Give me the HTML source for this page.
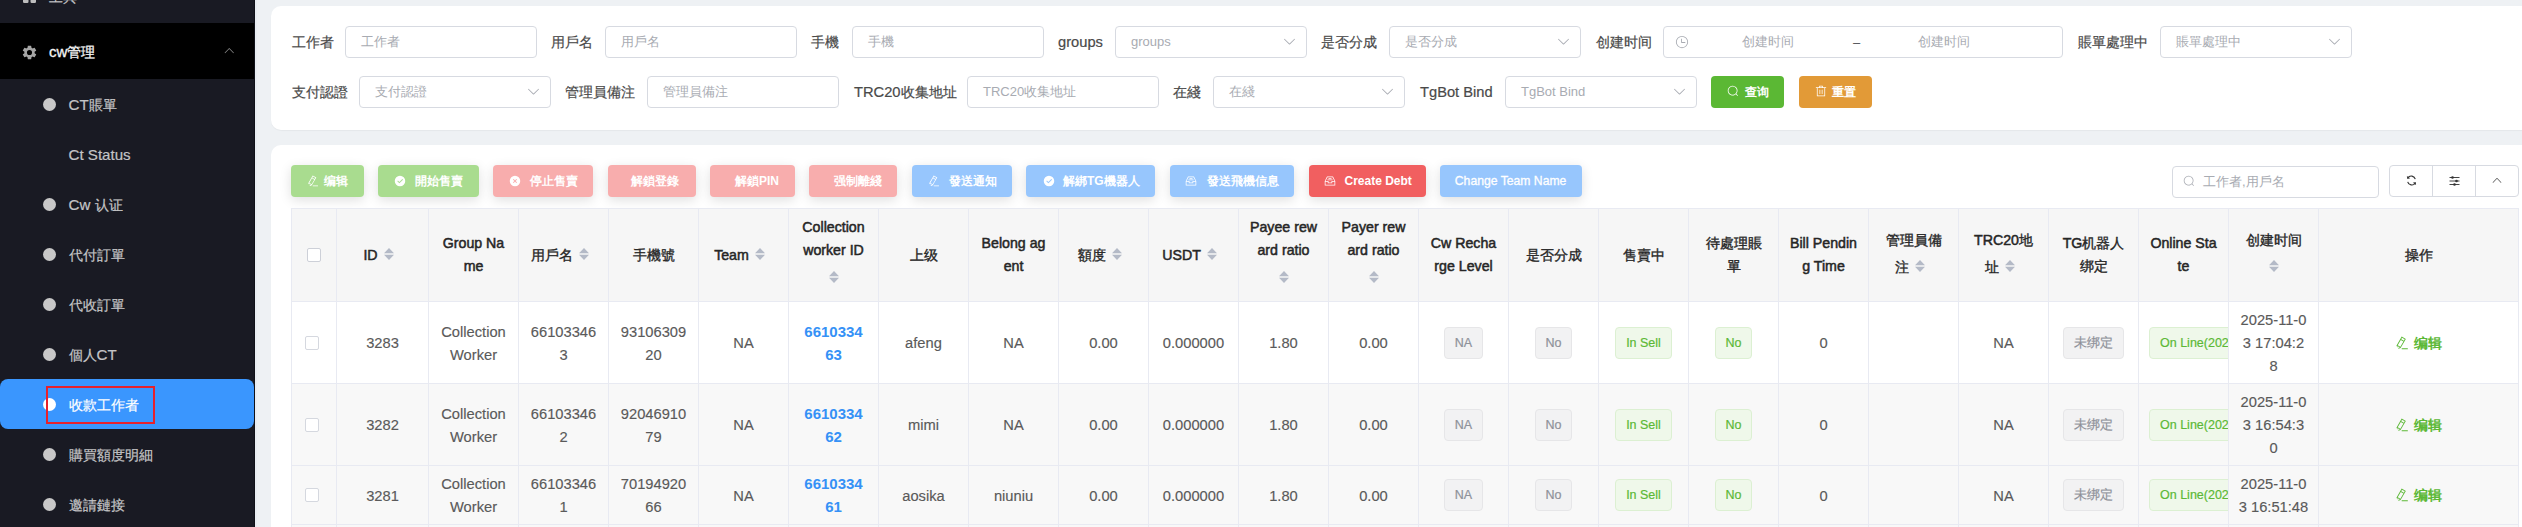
<!DOCTYPE html><html><head><meta charset="utf-8"><style>
*{box-sizing:border-box;margin:0;padding:0}
html,body{width:2522px;height:527px;overflow:hidden;background:#eef1f4;font-family:"Liberation Sans", sans-serif;}
.a{position:absolute}
.sb{left:0;top:0;width:255px;height:527px;background:#191a23;border-right:1px solid #101118}
.mi{position:absolute;left:0;width:254px;height:50px;color:#c4c4c6;font-size:14px;-webkit-text-stroke:0.2px currentColor}
.mi .dot{position:absolute;left:42.5px;top:19px;width:13px;height:13px;border-radius:50%;background:#c8c8c8}
.mi .t{position:absolute;left:68.5px;top:1px;line-height:50px;white-space:nowrap}
.card{background:#fff;border-radius:10px}
.lbl{-webkit-text-stroke:0.2px #4a4a4a;position:absolute;font-size:14px;color:#4a4a4a;line-height:20px;white-space:nowrap}
.inp{position:absolute;height:32px;border:1px solid #d7dae1;border-radius:4px;background:#fff}
.ph{position:absolute;left:15px;top:0;line-height:30px;font-size:13px;color:#a8abb2;white-space:nowrap}
.chev{position:absolute;right:11px;top:10px;width:12px;height:12px}
.btn{position:absolute;height:32px;border-radius:4px;color:#fff;font-size:12px;font-weight:bold;box-shadow:0 3px 12px rgba(0,0,0,0.13)}
.btn .t{position:absolute;top:0;line-height:32px;white-space:nowrap}

.tb{position:absolute;left:291px;top:208px;width:2228px;height:330px;background:#fff}
.vl{position:absolute;width:1px;background:#e8eaf2}
.hl{position:absolute;height:1px;background:#e8eaf2}
.hc b{font-weight:normal;-webkit-text-stroke:0.5px #262626;font-size:14.2px}
.hc{position:absolute;color:#262626;font-size:14px;font-weight:normal;-webkit-text-stroke:0.35px #262626;text-align:center;white-space:nowrap}
.bc{-webkit-text-stroke:0.15px #5a5a5a;position:absolute;color:#5a5a5a;font-size:14.7px;text-align:center;white-space:nowrap;line-height:23px}
.tag{-webkit-text-stroke:0.2px currentColor;position:absolute;height:32px;line-height:30px;font-size:12.5px;border-radius:4px;border:1px solid;white-space:nowrap;text-align:center;padding:0 10px}
.tg-i{background:#f2f2f3;border-color:#e6e6e8;color:#8e9199}
.tg-s{background:#eff8ea;border-color:#dcf0d2;color:#5cb836}
.sort{display:inline-block;width:10px;height:12px;vertical-align:middle;margin-left:7px;position:relative;top:-1px}
</style></head><body>
<div class="a sb">
<div class="mi" style="top:-27px;color:#c4c4c6"><svg class="a" style="left:22.5px;top:16.5px" width="13" height="13" viewBox="0 0 13 13"><rect x="0" y="0" width="5.5" height="5.5" rx="1.2" fill="#bdbdbd"/><rect x="7.5" y="0" width="5.5" height="5.5" rx="1.2" fill="#bdbdbd"/><rect x="0" y="7.5" width="5.5" height="5.5" rx="1.2" fill="#bdbdbd"/><rect x="7.5" y="7.5" width="5.5" height="5.5" rx="1.2" fill="#bdbdbd"/></svg><span class="t" style="left:49px;top:-1.5px">工具</span></div>
<div class="a" style="left:0;top:23px;width:254px;height:56px;background:#000"></div>
<svg class="a" style="left:21.5px;top:44.5px" width="15" height="15" viewBox="1.5 1.5 21 21"><path fill="#a6a6a6" d="M19.14 12.94c.04-.3.06-.61.06-.94 0-.32-.02-.64-.07-.94l2.03-1.58a.49.49 0 0 0 .12-.61l-1.92-3.32a.49.49 0 0 0-.59-.22l-2.39.96c-.5-.38-1.03-.7-1.62-.94l-.36-2.54a.48.48 0 0 0-.48-.41h-3.84c-.24 0-.43.17-.47.41l-.36 2.54c-.59.24-1.13.57-1.62.94l-2.39-.96a.48.48 0 0 0-.59.22L2.74 8.87c-.12.21-.08.47.12.61l2.03 1.58c-.05.3-.09.63-.09.94s.02.64.07.94l-2.03 1.58a.49.49 0 0 0-.12.61l1.92 3.32c.12.22.37.29.59.22l2.39-.96c.5.38 1.03.7 1.62.94l.36 2.54c.05.24.24.41.48.41h3.84c.24 0 .44-.17.47-.41l.36-2.54c.59-.24 1.13-.56 1.62-.94l2.39.96c.22.08.47 0 .59-.22l1.92-3.32c.12-.22.07-.47-.12-.61l-2.01-1.58zM12 15.6A3.6 3.6 0 1 1 12 8.4a3.6 3.6 0 0 1 0 7.2z"/></svg>
<div class="a" style="left:49px;top:23px;line-height:56px;margin-top:1px;font-size:14px;color:#f5f5f5;-webkit-text-stroke:0.3px #f5f5f5;white-space:nowrap"><span style="font-size:15px">cw</span>管理</div>
<svg class="a" style="left:222.6px;top:43.9px;" width="12.5" height="12.5" viewBox="0 0 1024 1024"><path fill="#8a8a8a" d="m488.832 344.32-339.84 356.672a32 32 0 0 0 0 44.16l.384.384a29.44 29.44 0 0 0 42.688 0l320-335.872 319.872 335.872a29.44 29.44 0 0 0 42.688 0l.384-.384a32 32 0 0 0 0-44.16L535.168 344.32a32 32 0 0 0-46.336 0z"/></svg>
<div class="mi" style="top:79px"><div class="dot"></div><span class="t"><span style="font-size:1.08em">CT</span>賬單</span></div>
<div class="mi" style="top:129px"><span class="t"><span style="font-size:1.08em">Ct Status</span></span></div>
<div class="mi" style="top:179px"><div class="dot"></div><span class="t"><span style="font-size:1.08em">Cw </span>认证</span></div>
<div class="mi" style="top:229px"><div class="dot"></div><span class="t">代付訂單</span></div>
<div class="mi" style="top:279px"><div class="dot"></div><span class="t">代收訂單</span></div>
<div class="mi" style="top:329px"><div class="dot"></div><span class="t">個人<span style="font-size:1.08em">CT</span></span></div>
<div class="mi" style="top:379px;background:#3a96fe;border-radius:8px;color:#fff"><div class="dot" style="background:#fff"></div><span class="t">收款工作者</span></div>
<div class="mi" style="top:429px"><div class="dot"></div><span class="t">購買額度明細</span></div>
<div class="mi" style="top:479px"><div class="dot"></div><span class="t">邀請鏈接</span></div>
<div class="a" style="left:46px;top:386px;width:109px;height:38px;border:2px solid #e8212b"></div>
</div>
<div class="a" style="left:255px;top:0;width:2px;height:527px;background:#e9edf2"></div>
<div class="a card" style="left:271px;top:6px;width:2270px;height:124px;box-shadow:0 1px 1px rgba(0,0,0,0.04)"></div>
<div class="lbl" style="left:291.5px;top:32px">工作者</div>
<div class="inp" style="left:345px;top:26px;width:192px"><span class="ph">工作者</span></div>
<div class="lbl" style="left:551px;top:32px">用戶名</div>
<div class="inp" style="left:605px;top:26px;width:192px"><span class="ph">用戶名</span></div>
<div class="lbl" style="left:811px;top:32px">手機</div>
<div class="inp" style="left:852px;top:26px;width:192px"><span class="ph">手機</span></div>
<div class="lbl" style="left:1058px;top:32px"><span style="font-size:1.05em">groups</span></div>
<div class="inp" style="left:1115px;top:26px;width:192px"><span class="ph">groups</span><svg class="a" style="left:166px;top:7px;" width="15" height="15" viewBox="0 0 1024 1024"><path fill="#a8abb2" d="M831.872 340.864 512 652.672 192.128 340.864a30.592 30.592 0 0 0-42.752 0 29.12 29.12 0 0 0 0 41.6L489.664 714.24a32 32 0 0 0 44.672 0l340.288-331.712a29.12 29.12 0 0 0 0-41.728 30.592 30.592 0 0 0-42.752 0z"/></svg></div>
<div class="lbl" style="left:1321px;top:32px">是否分成</div>
<div class="inp" style="left:1389px;top:26px;width:192px"><span class="ph">是否分成</span><svg class="a" style="left:166px;top:7px;" width="15" height="15" viewBox="0 0 1024 1024"><path fill="#a8abb2" d="M831.872 340.864 512 652.672 192.128 340.864a30.592 30.592 0 0 0-42.752 0 29.12 29.12 0 0 0 0 41.6L489.664 714.24a32 32 0 0 0 44.672 0l340.288-331.712a29.12 29.12 0 0 0 0-41.728 30.592 30.592 0 0 0-42.752 0z"/></svg></div>
<div class="lbl" style="left:1595.5px;top:32px">创建时间</div>
<div class="inp" style="left:1663px;top:26px;width:400px"><svg class="a" style="left:11.099999999999909px;top:7.700000000000003px;" width="14" height="14" viewBox="0 0 1024 1024"><path fill="#a8abb2" d="M512 896a384 384 0 1 0 0-768 384 384 0 0 0 0 768zm0 64a448 448 0 1 1 0-896 448 448 0 0 1 0 896z M480 256a32 32 0 0 1 32 32v256a32 32 0 0 1-64 0V288a32 32 0 0 1 32-32z M480 512h256q32 0 32 32t-32 32H480q-32 0-32-32t32-32z"/></svg><span class="ph" style="left:78px">创建时间</span><span class="ph" style="left:189px;top:1px;color:#505257">–</span><span class="ph" style="left:254px">创建时间</span></div>
<div class="lbl" style="left:2077.5px;top:32px">賬單處理中</div>
<div class="inp" style="left:2160px;top:26px;width:192px"><span class="ph">賬單處理中</span><svg class="a" style="left:166px;top:7px;" width="15" height="15" viewBox="0 0 1024 1024"><path fill="#a8abb2" d="M831.872 340.864 512 652.672 192.128 340.864a30.592 30.592 0 0 0-42.752 0 29.12 29.12 0 0 0 0 41.6L489.664 714.24a32 32 0 0 0 44.672 0l340.288-331.712a29.12 29.12 0 0 0 0-41.728 30.592 30.592 0 0 0-42.752 0z"/></svg></div>
<div class="lbl" style="left:291.5px;top:82px">支付認證</div>
<div class="inp" style="left:359px;top:76px;width:192px"><span class="ph">支付認證</span><svg class="a" style="left:166px;top:7px;" width="15" height="15" viewBox="0 0 1024 1024"><path fill="#a8abb2" d="M831.872 340.864 512 652.672 192.128 340.864a30.592 30.592 0 0 0-42.752 0 29.12 29.12 0 0 0 0 41.6L489.664 714.24a32 32 0 0 0 44.672 0l340.288-331.712a29.12 29.12 0 0 0 0-41.728 30.592 30.592 0 0 0-42.752 0z"/></svg></div>
<div class="lbl" style="left:565px;top:82px">管理員備注</div>
<div class="inp" style="left:647px;top:76px;width:192px"><span class="ph">管理員備注</span></div>
<div class="lbl" style="left:854px;top:82px"><span style="font-size:1.05em">TRC20</span>收集地址</div>
<div class="inp" style="left:967px;top:76px;width:192px"><span class="ph">TRC20收集地址</span></div>
<div class="lbl" style="left:1173px;top:82px">在綫</div>
<div class="inp" style="left:1213px;top:76px;width:192px"><span class="ph">在綫</span><svg class="a" style="left:166px;top:7px;" width="15" height="15" viewBox="0 0 1024 1024"><path fill="#a8abb2" d="M831.872 340.864 512 652.672 192.128 340.864a30.592 30.592 0 0 0-42.752 0 29.12 29.12 0 0 0 0 41.6L489.664 714.24a32 32 0 0 0 44.672 0l340.288-331.712a29.12 29.12 0 0 0 0-41.728 30.592 30.592 0 0 0-42.752 0z"/></svg></div>
<div class="lbl" style="left:1420px;top:82px"><span style="font-size:1.05em">TgBot Bind</span></div>
<div class="inp" style="left:1505px;top:76px;width:192px"><span class="ph">TgBot Bind</span><svg class="a" style="left:166px;top:7px;" width="15" height="15" viewBox="0 0 1024 1024"><path fill="#a8abb2" d="M831.872 340.864 512 652.672 192.128 340.864a30.592 30.592 0 0 0-42.752 0 29.12 29.12 0 0 0 0 41.6L489.664 714.24a32 32 0 0 0 44.672 0l340.288-331.712a29.12 29.12 0 0 0 0-41.728 30.592 30.592 0 0 0-42.752 0z"/></svg></div>
<div class="btn" style="left:1711px;top:76px;width:73px;background:#5bb834;box-shadow:none"><svg class="a" style="left:15.900000000000091px;top:9.400000000000006px;" width="12" height="12" viewBox="0 0 1024 1024"><path fill="#fff" d="m795.904 750.72 124.992 124.928a32 32 0 0 1-45.248 45.248L750.656 795.904a416 416 0 1 1 45.248-45.248zM480 832a352 352 0 1 0 0-704 352 352 0 0 0 0 704z"/></svg><span class="t" style="left:34px">查询</span></div>
<div class="btn" style="left:1799px;top:76px;width:73px;background:#e29a37;box-shadow:none"><svg class="a" style="left:16.25px;top:9.349999999999994px;" width="12" height="12" viewBox="0 0 1024 1024"><path fill="#fff" d="M160 256H96a32 32 0 0 1 0-64h256V95.936a32 32 0 0 1 32-32h256a32 32 0 0 1 32 32V192h256a32 32 0 1 1 0 64h-64v672a32 32 0 0 1-32 32H192a32 32 0 0 1-32-32V256zm448-64v-64H416v64h192zM224 896h576V256H224v640zm192-128a32 32 0 0 1-32-32V416a32 32 0 0 1 64 0v320a32 32 0 0 1-32 32zm192 0a32 32 0 0 1-32-32V416a32 32 0 0 1 64 0v320a32 32 0 0 1-32 32z"/></svg><span class="t" style="left:33px">重置</span></div>
<div class="a card" style="left:271px;top:145px;width:2270px;height:420px"></div>
<div class="btn" style="left:291px;top:165px;width:73px;background:#a9dc8f"><svg class="a" style="left:15.8px;top:9.599999999999994px;" width="12" height="12" viewBox="0 0 1024 1024"><path fill="#fff" d="m199.04 672.64 193.984 112 224-387.968-193.92-112-224 388.032zm-23.872 60.16 32.896 148.288 144.896-45.696L175.168 732.8zM455.04 229.184l193.92 112 56.704-98.112-193.984-112-56.64 98.112zM104.32 708.8l384-665.024 304.768 175.936L409.152 884.8h.064l-144.384 45.632L104.32 708.8zm384 254.272v-64h448v64h-448z"/></svg><span class="t" style="left:33px;font-weight:bold">编辑</span></div>
<div class="btn" style="left:378px;top:165px;width:101px;background:#a9dc8f"><svg class="a" style="left:16.1px;top:9.599999999999994px;" width="12" height="12" viewBox="0 0 1024 1024"><path fill="#fff" d="M512 64a448 448 0 1 1 0 896 448 448 0 0 1 0-896zm-55.808 536.384-99.52-99.584a38.4 38.4 0 1 0-54.336 54.336l126.72 126.72a38.272 38.272 0 0 0 54.336 0l262.4-262.464a38.4 38.4 0 1 0-54.272-54.336L456.192 600.384z"/></svg><span class="t" style="left:37px;font-weight:bold">開始售賣</span></div>
<div class="btn" style="left:493px;top:165px;width:100px;background:#f8adad"><svg class="a" style="left:15.7px;top:9.599999999999994px;" width="12" height="12" viewBox="0 0 1024 1024"><path fill="#fff" d="M512 64a448 448 0 1 1 0 896 448 448 0 0 1 0-896zm0 393.664L407.936 353.6a38.4 38.4 0 1 0-54.336 54.336L457.664 512 353.6 616.064a38.4 38.4 0 1 0 54.336 54.336L512 566.336 616.064 670.4a38.4 38.4 0 1 0 54.336-54.336L566.336 512 670.4 407.936a38.4 38.4 0 1 0-54.336-54.336L512 457.664z"/></svg><span class="t" style="left:36.5px;font-weight:bold">停止售賣</span></div>
<div class="btn" style="left:608px;top:165px;width:88px;background:#f8adad"><span class="t" style="left:23px;font-weight:bold">解鎖登錄</span></div>
<div class="btn" style="left:710px;top:165px;width:85px;background:#f8adad"><span class="t" style="left:25px;font-weight:bold">解鎖PIN</span></div>
<div class="btn" style="left:809px;top:165px;width:88px;background:#f8adad"><span class="t" style="left:24.5px;font-weight:bold">强制離綫</span></div>
<div class="btn" style="left:912px;top:165px;width:100px;background:#97c6fd"><svg class="a" style="left:15.6px;top:9.599999999999994px;" width="12" height="12" viewBox="0 0 1024 1024"><path fill="#fff" d="m199.04 672.64 193.984 112 224-387.968-193.92-112-224 388.032zm-23.872 60.16 32.896 148.288 144.896-45.696L175.168 732.8zM455.04 229.184l193.92 112 56.704-98.112-193.984-112-56.64 98.112zM104.32 708.8l384-665.024 304.768 175.936L409.152 884.8h.064l-144.384 45.632L104.32 708.8zm384 254.272v-64h448v64h-448z"/></svg><span class="t" style="left:36.5px;font-weight:bold">發送通知</span></div>
<div class="btn" style="left:1026px;top:165px;width:129px;background:#97c6fd"><svg class="a" style="left:16.5px;top:9.599999999999994px;" width="12" height="12" viewBox="0 0 1024 1024"><path fill="#fff" d="M512 64a448 448 0 1 1 0 896 448 448 0 0 1 0-896zm-55.808 536.384-99.52-99.584a38.4 38.4 0 1 0-54.336 54.336l126.72 126.72a38.272 38.272 0 0 0 54.336 0l262.4-262.464a38.4 38.4 0 1 0-54.272-54.336L456.192 600.384z"/></svg><span class="t" style="left:37px;font-weight:bold">解綁TG機器人</span></div>
<div class="btn" style="left:1170px;top:165px;width:124px;background:#97c6fd"><svg class="a" style="left:15.25px;top:9.599999999999994px;" width="12" height="12" viewBox="0 0 1024 1024"><path fill="#fff" d="M288 384h448v64H288v-64zm96-128h256v64H384v-64zM131.456 512H384v128h256V512h252.544L721.856 192H302.144L131.456 512zM896 576H704v128H320V576H128v256h768V576zM275.776 128h472.448a32 32 0 0 1 28.608 17.664l179.84 359.552A32 32 0 0 1 960 519.552V864a32 32 0 0 1-32 32H96a32 32 0 0 1-32-32V519.552a32 32 0 0 1 3.392-14.336l179.776-359.552A32 32 0 0 1 275.776 128z"/></svg><span class="t" style="left:36.5px;font-weight:bold">發送飛機信息</span></div>
<div class="btn" style="left:1309px;top:165px;width:117px;background:#f15f60"><svg class="a" style="left:15.25px;top:9.599999999999994px;" width="12" height="12" viewBox="0 0 1024 1024"><path fill="#fff" d="M288 384h448v64H288v-64zm96-128h256v64H384v-64zM131.456 512H384v128h256V512h252.544L721.856 192H302.144L131.456 512zM896 576H704v128H320V576H128v256h768V576zM275.776 128h472.448a32 32 0 0 1 28.608 17.664l179.84 359.552A32 32 0 0 1 960 519.552V864a32 32 0 0 1-32 32H96a32 32 0 0 1-32-32V519.552a32 32 0 0 1 3.392-14.336l179.776-359.552A32 32 0 0 1 275.776 128z"/></svg><span class="t" style="left:35.5px;font-weight:bold">Create Debt</span></div>
<div class="btn" style="left:1440px;top:165px;width:142px;background:#97c6fd"><span class="t" style="left:14.799999999999955px;font-weight:normal;-webkit-text-stroke:0.3px #fff;font-size:12.2px">Change Team Name</span></div>
<div class="inp" style="left:2172px;top:166px;width:207px;height:32px"><svg class="a" style="left:10.199999999999818px;top:8.300000000000011px;" width="12" height="12" viewBox="0 0 1024 1024"><path fill="#a8abb2" d="m795.904 750.72 124.992 124.928a32 32 0 0 1-45.248 45.248L750.656 795.904a416 416 0 1 1 45.248-45.248zM480 832a352 352 0 1 0 0-704 352 352 0 0 0 0 704z"/></svg><span class="ph" style="left:30px">工作者,用戶名</span></div>
<div class="a" style="left:2389px;top:165px;width:130px;height:32px;border:1px solid #d7dae1;border-radius:4px;background:#fff"></div>
<div class="a" style="left:2432px;top:165px;width:1px;height:32px;background:#d7dae1"></div>
<div class="a" style="left:2475px;top:165px;width:1px;height:32px;background:#d7dae1"></div>
<svg class="a" style="left:2405.5px;top:175px" width="11" height="11" viewBox="0 0 11 11"><path d="M9.3 4.2 A4.2 4.2 0 0 0 1.8 2.8" fill="none" stroke="#333" stroke-width="1.1"/><path d="M0.9 0.9 L1.3 4 L4.2 3.2 Z" fill="#333"/><path d="M1.7 6.8 A4.2 4.2 0 0 0 9.2 8.2" fill="none" stroke="#333" stroke-width="1.1"/><path d="M10.1 10.1 L9.7 7 L6.8 7.8 Z" fill="#333"/></svg>
<svg class="a" style="left:2448.5px;top:175.5px" width="11" height="10" viewBox="0 0 11 10"><path d="M0.5 1.5 H10.5 M0.5 5 H10.5 M0.5 8.5 H10.5" stroke="#444" stroke-width="1"/><circle cx="3.5" cy="1.5" r="1.3" fill="#333"/><circle cx="7.5" cy="5" r="1.3" fill="#333"/><circle cx="5.5" cy="8.5" r="1.3" fill="#333"/></svg>
<svg class="a" style="left:2491.4px;top:174px;" width="12" height="12" viewBox="0 0 1024 1024"><path fill="#555" d="m488.832 344.32-339.84 356.672a32 32 0 0 0 0 44.16l.384.384a29.44 29.44 0 0 0 42.688 0l320-335.872 319.872 335.872a29.44 29.44 0 0 0 42.688 0l.384-.384a32 32 0 0 0 0-44.16L535.168 344.32a32 32 0 0 0-46.336 0z"/></svg>
<div class="a" style="left:291px;top:208px;width:2228px;height:94px;background:#f6f6f6"></div>
<div class="a" style="left:291px;top:383px;width:2228px;height:150px;background:#f8f8f8"></div>
<div class="vl" style="left:291px;top:208px;height:330px"></div>
<div class="vl" style="left:336px;top:208px;height:330px"></div>
<div class="vl" style="left:428px;top:208px;height:330px"></div>
<div class="vl" style="left:518px;top:208px;height:330px"></div>
<div class="vl" style="left:608px;top:208px;height:330px"></div>
<div class="vl" style="left:698px;top:208px;height:330px"></div>
<div class="vl" style="left:788px;top:208px;height:330px"></div>
<div class="vl" style="left:878px;top:208px;height:330px"></div>
<div class="vl" style="left:968px;top:208px;height:330px"></div>
<div class="vl" style="left:1058px;top:208px;height:330px"></div>
<div class="vl" style="left:1148px;top:208px;height:330px"></div>
<div class="vl" style="left:1238px;top:208px;height:330px"></div>
<div class="vl" style="left:1328px;top:208px;height:330px"></div>
<div class="vl" style="left:1418px;top:208px;height:330px"></div>
<div class="vl" style="left:1508px;top:208px;height:330px"></div>
<div class="vl" style="left:1598px;top:208px;height:330px"></div>
<div class="vl" style="left:1688px;top:208px;height:330px"></div>
<div class="vl" style="left:1778px;top:208px;height:330px"></div>
<div class="vl" style="left:1868px;top:208px;height:330px"></div>
<div class="vl" style="left:1958px;top:208px;height:330px"></div>
<div class="vl" style="left:2048px;top:208px;height:330px"></div>
<div class="vl" style="left:2138px;top:208px;height:330px"></div>
<div class="vl" style="left:2228px;top:208px;height:330px"></div>
<div class="vl" style="left:2318px;top:208px;height:330px"></div>
<div class="vl" style="left:2518px;top:208px;height:330px"></div>
<div class="hl" style="left:291px;top:208px;width:2228px"></div>
<div class="hl" style="left:291px;top:301px;width:2228px"></div>
<div class="hl" style="left:291px;top:383px;width:2228px"></div>
<div class="hl" style="left:291px;top:465px;width:2228px"></div>
<div class="hl" style="left:291px;top:524px;width:2228px"></div>
<div class="a" style="left:307px;top:248px;width:14px;height:14px;border:1px solid #cdd0d8;border-radius:2px;background:#fff"></div>
<div class="hc" style="left:337px;top:240.0px;width:91px;height:30px;line-height:30px"><b>ID</b><span style="display:inline-block;width:24px;text-align:left;padding-left:7px"><svg class="sort" style="margin-left:0;left:-1px;top:-2px" viewBox="0 0 10 12"><path d="M5 0 L10 5.2 H0 Z M0 6.8 H10 L5 12 Z" fill="#b4bac7"/></svg></span></div>
<div class="hc" style="left:429px;top:232.0px;width:89px;height:23px;line-height:23px"><b>Group Na</b></div>
<div class="hc" style="left:429px;top:255.0px;width:89px;height:23px;line-height:23px"><b>me</b></div>
<div class="hc" style="left:519px;top:240.0px;width:89px;height:30px;line-height:30px">用戶名<span style="display:inline-block;width:24px;text-align:left;padding-left:7px"><svg class="sort" style="margin-left:0;left:-1px;top:-2px" viewBox="0 0 10 12"><path d="M5 0 L10 5.2 H0 Z M0 6.8 H10 L5 12 Z" fill="#b4bac7"/></svg></span></div>
<div class="hc" style="left:609px;top:243.5px;width:89px;height:23px;line-height:23px">手機號</div>
<div class="hc" style="left:699px;top:240.0px;width:89px;height:30px;line-height:30px"><b>Team</b><span style="display:inline-block;width:24px;text-align:left;padding-left:7px"><svg class="sort" style="margin-left:0;left:-1px;top:-2px" viewBox="0 0 10 12"><path d="M5 0 L10 5.2 H0 Z M0 6.8 H10 L5 12 Z" fill="#b4bac7"/></svg></span></div>
<div class="hc" style="left:789px;top:216.0px;width:89px;height:23px;line-height:23px"><b>Collection</b></div>
<div class="hc" style="left:789px;top:239.0px;width:89px;height:23px;line-height:23px"><b>worker ID</b></div>
<div class="hc" style="left:789px;top:262.0px;width:89px;height:30px;line-height:30px"><svg style="display:inline-block;width:10px;height:12px;vertical-align:middle;position:relative;top:-1.5px" viewBox="0 0 10 12"><path d="M5 0 L10 5.2 H0 Z M0 6.8 H10 L5 12 Z" fill="#b4bac7"/></svg></div>
<div class="hc" style="left:879px;top:243.5px;width:89px;height:23px;line-height:23px">上级</div>
<div class="hc" style="left:969px;top:232.0px;width:89px;height:23px;line-height:23px"><b>Belong ag</b></div>
<div class="hc" style="left:969px;top:255.0px;width:89px;height:23px;line-height:23px"><b>ent</b></div>
<div class="hc" style="left:1059px;top:240.0px;width:89px;height:30px;line-height:30px">額度<span style="display:inline-block;width:24px;text-align:left;padding-left:7px"><svg class="sort" style="margin-left:0;left:-1px;top:-2px" viewBox="0 0 10 12"><path d="M5 0 L10 5.2 H0 Z M0 6.8 H10 L5 12 Z" fill="#b4bac7"/></svg></span></div>
<div class="hc" style="left:1149px;top:240.0px;width:89px;height:30px;line-height:30px"><b>USDT</b><span style="display:inline-block;width:24px;text-align:left;padding-left:7px"><svg class="sort" style="margin-left:0;left:-1px;top:-2px" viewBox="0 0 10 12"><path d="M5 0 L10 5.2 H0 Z M0 6.8 H10 L5 12 Z" fill="#b4bac7"/></svg></span></div>
<div class="hc" style="left:1239px;top:216.0px;width:89px;height:23px;line-height:23px"><b>Payee rew</b></div>
<div class="hc" style="left:1239px;top:239.0px;width:89px;height:23px;line-height:23px"><b>ard ratio</b></div>
<div class="hc" style="left:1239px;top:262.0px;width:89px;height:30px;line-height:30px"><svg style="display:inline-block;width:10px;height:12px;vertical-align:middle;position:relative;top:-1.5px" viewBox="0 0 10 12"><path d="M5 0 L10 5.2 H0 Z M0 6.8 H10 L5 12 Z" fill="#b4bac7"/></svg></div>
<div class="hc" style="left:1329px;top:216.0px;width:89px;height:23px;line-height:23px"><b>Payer rew</b></div>
<div class="hc" style="left:1329px;top:239.0px;width:89px;height:23px;line-height:23px"><b>ard ratio</b></div>
<div class="hc" style="left:1329px;top:262.0px;width:89px;height:30px;line-height:30px"><svg style="display:inline-block;width:10px;height:12px;vertical-align:middle;position:relative;top:-1.5px" viewBox="0 0 10 12"><path d="M5 0 L10 5.2 H0 Z M0 6.8 H10 L5 12 Z" fill="#b4bac7"/></svg></div>
<div class="hc" style="left:1419px;top:232.0px;width:89px;height:23px;line-height:23px"><b>Cw Recha</b></div>
<div class="hc" style="left:1419px;top:255.0px;width:89px;height:23px;line-height:23px"><b>rge Level</b></div>
<div class="hc" style="left:1509px;top:243.5px;width:89px;height:23px;line-height:23px">是否分成</div>
<div class="hc" style="left:1599px;top:243.5px;width:89px;height:23px;line-height:23px">售賣中</div>
<div class="hc" style="left:1689px;top:232.0px;width:89px;height:23px;line-height:23px">待處理賬</div>
<div class="hc" style="left:1689px;top:255.0px;width:89px;height:23px;line-height:23px">單</div>
<div class="hc" style="left:1779px;top:232.0px;width:89px;height:23px;line-height:23px"><b>Bill Pendin</b></div>
<div class="hc" style="left:1779px;top:255.0px;width:89px;height:23px;line-height:23px"><b>g Time</b></div>
<div class="hc" style="left:1869px;top:228.5px;width:89px;height:23px;line-height:23px">管理員備</div>
<div class="hc" style="left:1869px;top:251.5px;width:89px;height:30px;line-height:30px">注<span style="display:inline-block;width:24px;text-align:left;padding-left:7px"><svg class="sort" style="margin-left:0;left:-1px;top:-2px" viewBox="0 0 10 12"><path d="M5 0 L10 5.2 H0 Z M0 6.8 H10 L5 12 Z" fill="#b4bac7"/></svg></span></div>
<div class="hc" style="left:1959px;top:228.5px;width:89px;height:23px;line-height:23px"><b>TRC20</b>地</div>
<div class="hc" style="left:1959px;top:251.5px;width:89px;height:30px;line-height:30px">址<span style="display:inline-block;width:24px;text-align:left;padding-left:7px"><svg class="sort" style="margin-left:0;left:-1px;top:-2px" viewBox="0 0 10 12"><path d="M5 0 L10 5.2 H0 Z M0 6.8 H10 L5 12 Z" fill="#b4bac7"/></svg></span></div>
<div class="hc" style="left:2049px;top:232.0px;width:89px;height:23px;line-height:23px"><b>TG</b>机器人</div>
<div class="hc" style="left:2049px;top:255.0px;width:89px;height:23px;line-height:23px">绑定</div>
<div class="hc" style="left:2139px;top:232.0px;width:89px;height:23px;line-height:23px"><b>Online Sta</b></div>
<div class="hc" style="left:2139px;top:255.0px;width:89px;height:23px;line-height:23px"><b>te</b></div>
<div class="hc" style="left:2229px;top:228.5px;width:89px;height:23px;line-height:23px">创建时间</div>
<div class="hc" style="left:2229px;top:251.5px;width:89px;height:30px;line-height:30px"><svg style="display:inline-block;width:10px;height:12px;vertical-align:middle;position:relative;top:-1.5px" viewBox="0 0 10 12"><path d="M5 0 L10 5.2 H0 Z M0 6.8 H10 L5 12 Z" fill="#b4bac7"/></svg></div>
<div class="hc" style="left:2319px;top:243.5px;width:199px;height:23px;line-height:23px">操作</div>
<div class="a" style="left:305px;top:335.5px;width:14px;height:14px;border:1px solid #d5d8df;border-radius:2px;background:#fff"></div>
<div class="bc" style="left:337px;top:332.0px;width:91px;">3283</div>
<div class="bc" style="left:429px;top:320.5px;width:89px;">Collection<br>Worker</div>
<div class="bc" style="left:519px;top:320.5px;width:89px;">66103346<br>3</div>
<div class="bc" style="left:609px;top:320.5px;width:89px;">93106309<br>20</div>
<div class="bc" style="left:699px;top:332.0px;width:89px;">NA</div>
<div class="bc" style="left:789px;top:320.5px;width:89px;color:#3591f6;font-size:15px;font-weight:bold;-webkit-text-stroke:0;margin-top:-0.8px">6610334<br>63</div>
<div class="bc" style="left:879px;top:332.0px;width:89px;">afeng</div>
<div class="bc" style="left:969px;top:332.0px;width:89px;">NA</div>
<div class="bc" style="left:1059px;top:332.0px;width:89px;">0.00</div>
<div class="bc" style="left:1149px;top:332.0px;width:89px;">0.000000</div>
<div class="bc" style="left:1239px;top:332.0px;width:89px;">1.80</div>
<div class="bc" style="left:1329px;top:332.0px;width:89px;">0.00</div>
<div class="a" style="left:1419px;top:326.5px;width:89px;height:32px;display:flex;justify-content:center"><div class="tag tg-i" style="position:relative">NA</div></div>
<div class="a" style="left:1509px;top:326.5px;width:89px;height:32px;display:flex;justify-content:center"><div class="tag tg-i" style="position:relative">No</div></div>
<div class="a" style="left:1599px;top:326.5px;width:89px;height:32px;display:flex;justify-content:center"><div class="tag tg-s" style="position:relative">In Sell</div></div>
<div class="a" style="left:1689px;top:326.5px;width:89px;height:32px;display:flex;justify-content:center"><div class="tag tg-s" style="position:relative">No</div></div>
<div class="bc" style="left:1779px;top:332.0px;width:89px;">0</div>
<div class="bc" style="left:1959px;top:332.0px;width:89px;">NA</div>
<div class="a" style="left:2049px;top:326.5px;width:89px;height:32px;display:flex;justify-content:center"><div class="tag tg-i" style="position:relative">未绑定</div></div>
<div class="a" style="left:2139px;top:326.5px;width:89px;height:32px;overflow:hidden"><div class="tag tg-s" style="left:10px;top:0">On Line(2025-11-03 17:04:28)</div></div>
<div class="bc" style="left:2229px;top:309.0px;width:89px;">2025-11-0<br>3 17:04:2<br>8</div>
<svg class="a" style="left:2394.7px;top:335.6px;" width="14" height="14" viewBox="0 0 1024 1024"><path fill="#5cb836" d="m199.04 672.64 193.984 112 224-387.968-193.92-112-224 388.032zm-23.872 60.16 32.896 148.288 144.896-45.696L175.168 732.8zM455.04 229.184l193.92 112 56.704-98.112-193.984-112-56.64 98.112zM104.32 708.8l384-665.024 304.768 175.936L409.152 884.8h.064l-144.384 45.632L104.32 708.8zm384 254.272v-64h448v64h-448z"/></svg>
<div class="a" style="left:2414px;top:331.5px;line-height:23px;font-size:14px;color:#5cb836;font-weight:bold;white-space:nowrap">编辑</div>
<div class="a" style="left:305px;top:417.5px;width:14px;height:14px;border:1px solid #d5d8df;border-radius:2px;background:#fff"></div>
<div class="bc" style="left:337px;top:414.0px;width:91px;">3282</div>
<div class="bc" style="left:429px;top:402.5px;width:89px;">Collection<br>Worker</div>
<div class="bc" style="left:519px;top:402.5px;width:89px;">66103346<br>2</div>
<div class="bc" style="left:609px;top:402.5px;width:89px;">92046910<br>79</div>
<div class="bc" style="left:699px;top:414.0px;width:89px;">NA</div>
<div class="bc" style="left:789px;top:402.5px;width:89px;color:#3591f6;font-size:15px;font-weight:bold;-webkit-text-stroke:0;margin-top:-0.8px">6610334<br>62</div>
<div class="bc" style="left:879px;top:414.0px;width:89px;">mimi</div>
<div class="bc" style="left:969px;top:414.0px;width:89px;">NA</div>
<div class="bc" style="left:1059px;top:414.0px;width:89px;">0.00</div>
<div class="bc" style="left:1149px;top:414.0px;width:89px;">0.000000</div>
<div class="bc" style="left:1239px;top:414.0px;width:89px;">1.80</div>
<div class="bc" style="left:1329px;top:414.0px;width:89px;">0.00</div>
<div class="a" style="left:1419px;top:408.5px;width:89px;height:32px;display:flex;justify-content:center"><div class="tag tg-i" style="position:relative">NA</div></div>
<div class="a" style="left:1509px;top:408.5px;width:89px;height:32px;display:flex;justify-content:center"><div class="tag tg-i" style="position:relative">No</div></div>
<div class="a" style="left:1599px;top:408.5px;width:89px;height:32px;display:flex;justify-content:center"><div class="tag tg-s" style="position:relative">In Sell</div></div>
<div class="a" style="left:1689px;top:408.5px;width:89px;height:32px;display:flex;justify-content:center"><div class="tag tg-s" style="position:relative">No</div></div>
<div class="bc" style="left:1779px;top:414.0px;width:89px;">0</div>
<div class="bc" style="left:1959px;top:414.0px;width:89px;">NA</div>
<div class="a" style="left:2049px;top:408.5px;width:89px;height:32px;display:flex;justify-content:center"><div class="tag tg-i" style="position:relative">未绑定</div></div>
<div class="a" style="left:2139px;top:408.5px;width:89px;height:32px;overflow:hidden"><div class="tag tg-s" style="left:10px;top:0">On Line(2025-11-03 17:04:28)</div></div>
<div class="bc" style="left:2229px;top:391.0px;width:89px;">2025-11-0<br>3 16:54:3<br>0</div>
<svg class="a" style="left:2394.7px;top:417.6px;" width="14" height="14" viewBox="0 0 1024 1024"><path fill="#5cb836" d="m199.04 672.64 193.984 112 224-387.968-193.92-112-224 388.032zm-23.872 60.16 32.896 148.288 144.896-45.696L175.168 732.8zM455.04 229.184l193.92 112 56.704-98.112-193.984-112-56.64 98.112zM104.32 708.8l384-665.024 304.768 175.936L409.152 884.8h.064l-144.384 45.632L104.32 708.8zm384 254.272v-64h448v64h-448z"/></svg>
<div class="a" style="left:2414px;top:413.5px;line-height:23px;font-size:14px;color:#5cb836;font-weight:bold;white-space:nowrap">编辑</div>
<div class="a" style="left:305px;top:488.0px;width:14px;height:14px;border:1px solid #d5d8df;border-radius:2px;background:#fff"></div>
<div class="bc" style="left:337px;top:484.5px;width:91px;">3281</div>
<div class="bc" style="left:429px;top:473.0px;width:89px;">Collection<br>Worker</div>
<div class="bc" style="left:519px;top:473.0px;width:89px;">66103346<br>1</div>
<div class="bc" style="left:609px;top:473.0px;width:89px;">70194920<br>66</div>
<div class="bc" style="left:699px;top:484.5px;width:89px;">NA</div>
<div class="bc" style="left:789px;top:473.0px;width:89px;color:#3591f6;font-size:15px;font-weight:bold;-webkit-text-stroke:0;margin-top:-0.8px">6610334<br>61</div>
<div class="bc" style="left:879px;top:484.5px;width:89px;">aosika</div>
<div class="bc" style="left:969px;top:484.5px;width:89px;">niuniu</div>
<div class="bc" style="left:1059px;top:484.5px;width:89px;">0.00</div>
<div class="bc" style="left:1149px;top:484.5px;width:89px;">0.000000</div>
<div class="bc" style="left:1239px;top:484.5px;width:89px;">1.80</div>
<div class="bc" style="left:1329px;top:484.5px;width:89px;">0.00</div>
<div class="a" style="left:1419px;top:479.0px;width:89px;height:32px;display:flex;justify-content:center"><div class="tag tg-i" style="position:relative">NA</div></div>
<div class="a" style="left:1509px;top:479.0px;width:89px;height:32px;display:flex;justify-content:center"><div class="tag tg-i" style="position:relative">No</div></div>
<div class="a" style="left:1599px;top:479.0px;width:89px;height:32px;display:flex;justify-content:center"><div class="tag tg-s" style="position:relative">In Sell</div></div>
<div class="a" style="left:1689px;top:479.0px;width:89px;height:32px;display:flex;justify-content:center"><div class="tag tg-s" style="position:relative">No</div></div>
<div class="bc" style="left:1779px;top:484.5px;width:89px;">0</div>
<div class="bc" style="left:1959px;top:484.5px;width:89px;">NA</div>
<div class="a" style="left:2049px;top:479.0px;width:89px;height:32px;display:flex;justify-content:center"><div class="tag tg-i" style="position:relative">未绑定</div></div>
<div class="a" style="left:2139px;top:479.0px;width:89px;height:32px;overflow:hidden"><div class="tag tg-s" style="left:10px;top:0">On Line(2025-11-03 17:04:28)</div></div>
<div class="bc" style="left:2229px;top:473.0px;width:89px;">2025-11-0<br>3 16:51:48</div>
<svg class="a" style="left:2394.7px;top:488.1px;" width="14" height="14" viewBox="0 0 1024 1024"><path fill="#5cb836" d="m199.04 672.64 193.984 112 224-387.968-193.92-112-224 388.032zm-23.872 60.16 32.896 148.288 144.896-45.696L175.168 732.8zM455.04 229.184l193.92 112 56.704-98.112-193.984-112-56.64 98.112zM104.32 708.8l384-665.024 304.768 175.936L409.152 884.8h.064l-144.384 45.632L104.32 708.8zm384 254.272v-64h448v64h-448z"/></svg>
<div class="a" style="left:2414px;top:484.0px;line-height:23px;font-size:14px;color:#5cb836;font-weight:bold;white-space:nowrap">编辑</div>
</body></html>
